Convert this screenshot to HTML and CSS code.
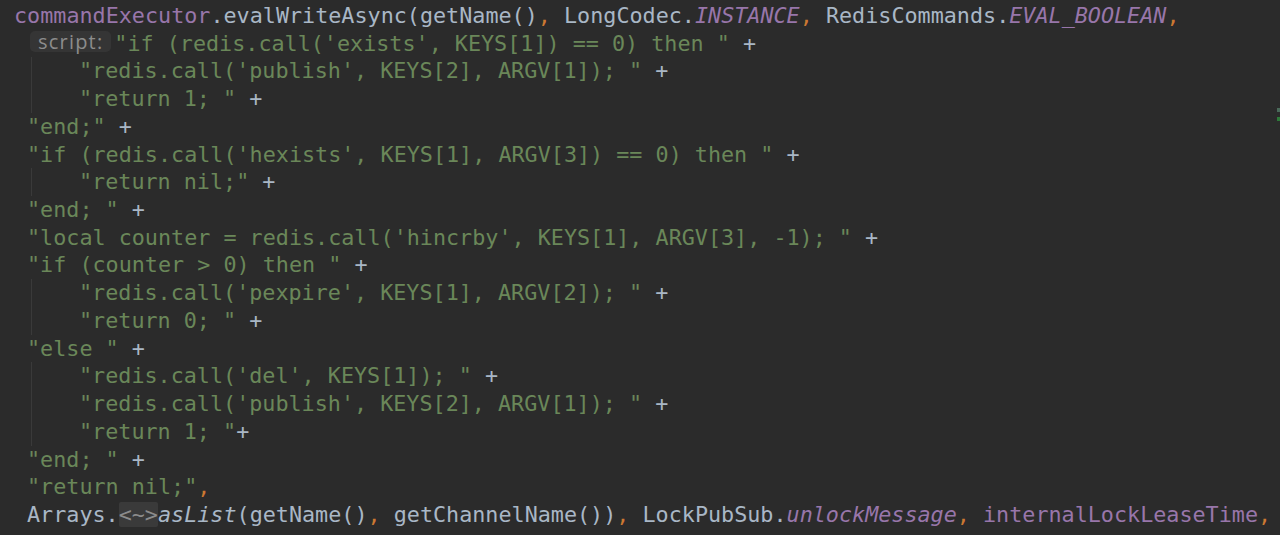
FILE: index.html
```html
<!DOCTYPE html>
<html>
<head>
<meta charset="utf-8">
<link rel="stylesheet" href="styles.css">
</head>
<body>
<div class="editor">
  <div class="code">
    <div class="ln first"><span class="fld">commandExecutor</span>.evalWriteAsync(getName()<span class="kw">,</span> LongCodec.<span class="st">INSTANCE</span><span class="kw">,</span> RedisCommands.<span class="st">EVAL_BOOLEAN</span><span class="kw">,</span></div>
    <div class="ln"><span class="hint">script:</span><span class="s">"if (redis.call('exists', KEYS[1]) == 0) then "</span> +</div>
    <div class="ln"><span class="ind"></span><span class="s">"redis.call('publish', KEYS[2], ARGV[1]); "</span> +</div>
    <div class="ln"><span class="ind"></span><span class="s">"return 1; "</span> +</div>
    <div class="ln"><span class="s">"end;"</span> +</div>
    <div class="ln"><span class="s">"if (redis.call('hexists', KEYS[1], ARGV[3]) == 0) then "</span> +</div>
    <div class="ln"><span class="ind"></span><span class="s">"return nil;"</span> +</div>
    <div class="ln"><span class="s">"end; "</span> +</div>
    <div class="ln"><span class="s">"local counter = redis.call('hincrby', KEYS[1], ARGV[3], -1); "</span> +</div>
    <div class="ln"><span class="s">"if (counter &gt; 0) then "</span> +</div>
    <div class="ln"><span class="ind"></span><span class="s">"redis.call('pexpire', KEYS[1], ARGV[2]); "</span> +</div>
    <div class="ln"><span class="ind"></span><span class="s">"return 0; "</span> +</div>
    <div class="ln"><span class="s">"else "</span> +</div>
    <div class="ln"><span class="ind"></span><span class="s">"redis.call('del', KEYS[1]); "</span> +</div>
    <div class="ln"><span class="ind"></span><span class="s">"redis.call('publish', KEYS[2], ARGV[1]); "</span> +</div>
    <div class="ln"><span class="ind"></span><span class="s">"return 1; "</span>+</div>
    <div class="ln"><span class="s">"end; "</span> +</div>
    <div class="ln"><span class="s">"return nil;"</span><span class="kw">,</span></div>
    <div class="ln">Arrays.<span class="fold">&lt;~&gt;</span><span class="sm">asList</span>(getName()<span class="kw">,</span> getChannelName())<span class="kw">,</span> LockPubSub.<span class="st">unlockMessage</span><span class="kw">,</span> <span class="fld">internalLockLeaseTime</span><span class="kw">,</span></div>
  </div>
  <div class="mark m1"></div>
  <div class="mark m2"></div>
</div>
</body>
</html>
```

FILE: styles.css
```css
html, body {
  margin: 0;
  padding: 0;
  background: #2b2b2b;
}
.editor {
  position: relative;
  width: 1280px;
  height: 535px;
  overflow: hidden;
  background: #2b2b2b;
}
.code {
  padding-top: 2px;
  font-family: "DejaVu Sans Mono", monospace;
  font-size: 21.75px;
  color: #a9b7c6;
}
.ln {
  height: 27.72px;
  line-height: 27.72px;
  white-space: pre;
  padding-left: 27px;
}
.ln.first {
  padding-left: 14px;
}
.fld { color: #9876aa; }
.st { color: #9876aa; font-style: italic; }
.sm { font-style: italic; }
.kw { color: #cc7832; }
.s { color: #6a8759; }
.ind {
  display: inline-block;
  width: 52px;
  height: 27.72px;
  vertical-align: top;
  background: linear-gradient(#3a3a3a, #3a3a3a) no-repeat 4px 0 / 1px 100%;
}
.hint {
  display: inline-block;
  height: 21px;
  line-height: 21px;
  margin-left: 3px;
  margin-right: 3px;
  padding: 0 8px 0 8px;
  border-radius: 5px;
  background: #353535;
  color: #8c8c8c;
  font-family: "Open Sans", "Liberation Sans", sans-serif;
  font-size: 20px;
  letter-spacing: 1.2px;
  vertical-align: 2px;
}
.fold {
  background: #3a3a3a;
  color: #8c8c8c;
  border-radius: 2px;
}
.mark {
  position: absolute;
  right: 0;
  width: 3px;
  height: 4px;
}
.m1 { top: 108px; background: #4a6a5a; }
.m2 { top: 117px; background: #2e7a3a; }
```
